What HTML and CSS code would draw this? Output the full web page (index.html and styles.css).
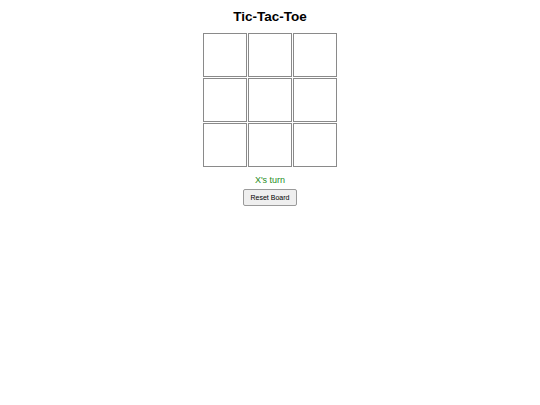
FILE: index.html
```html
<!DOCTYPE html>
<html>
<head>
<meta charset="utf-8">
<link rel="stylesheet" href="styles.css">
</head>
<body>
<div class="app">
  <h1 class="title">Tic-Tac-Toe</h1>
  <div class="board">
    <div class="cell"></div><div class="cell"></div><div class="cell"></div>
    <div class="cell"></div><div class="cell"></div><div class="cell"></div>
    <div class="cell"></div><div class="cell"></div><div class="cell"></div>
  </div>
  <div class="status">X's turn</div>
  <button class="reset">Reset Board</button>
</div>
</body>
</html>
```
FILE: styles.css
```css
html, body {
  margin: 0;
  padding: 0;
  background: #fff;
}
body {
  font-family: "Liberation Sans", Arial, sans-serif;
}
.app {
  display: flex;
  flex-direction: column;
  align-items: center;
  padding-top: 9px;
}
.title {
  font-size: 13.5px;
  font-weight: bold;
  line-height: 16px;
  margin: 0 0 8px 0;
  color: #000;
}
.board {
  display: grid;
  grid-template-columns: repeat(3, 44px);
  grid-template-rows: repeat(3, 44px);
  gap: 1px;
}
.cell {
  box-sizing: border-box;
  border: 1px solid #8a8a8a;
  background: #fff;
}
.status {
  margin-top: 8px;
  font-size: 9px;
  line-height: 11px;
  color: #1e8c1e;
}
.reset {
  margin-top: 3px;
  font-family: "Liberation Sans", Arial, sans-serif;
  font-size: 7px;
  height: 17px;
  padding: 0 7px;
  background: #efefef;
  border: 1px solid #9a9a9a;
  border-radius: 2px;
  color: #000;
}
```
